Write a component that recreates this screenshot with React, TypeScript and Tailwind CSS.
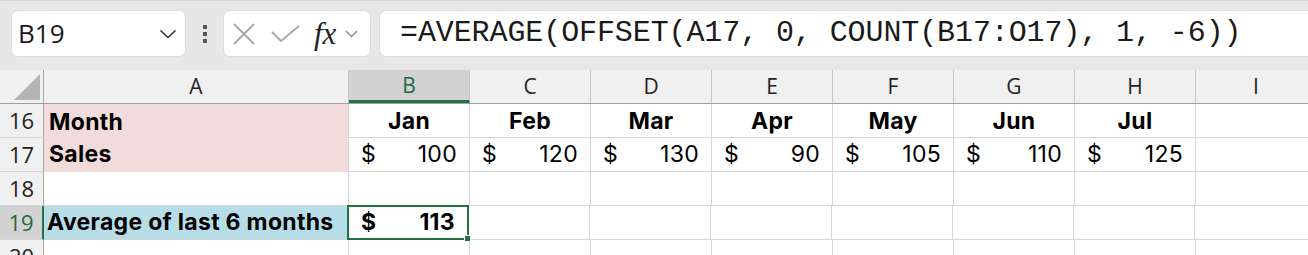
import React from "react";

const cols = ["B", "C", "D", "E", "F", "G", "H", "I"];
const months = ["Jan", "Feb", "Mar", "Apr", "May", "Jun", "Jul"];
const sales = [100, 120, 130, 90, 105, 110, 125];

const cellFont = { fontFamily: "Inter, 'Noto Sans', sans-serif" };
const uiFont = { fontFamily: "'Open Sans', 'Noto Sans', sans-serif" };

function RowHead({ n, active }: { n: number; active?: boolean }) {
  return (
    <div
      className={`w-[44px] shrink-0 h-[34px] flex items-center justify-center text-[22px] tracking-normal font-normal border-b border-[#d6d6d6] ${
        active
          ? "bg-[#d2d2d2] text-[#1e6b41] border-r-2 border-r-[#217346]"
          : "bg-[#f0f0f0] text-[#222] border-r border-r-[#a8a8a8]"
      }`}
      style={uiFont}
    >
      {n}
    </div>
  );
}

function Money({ v, bold }: { v: number; bold?: boolean }) {
  return (
    <div className={`flex w-full justify-between pl-[12px] pr-[12px] ${bold ? "font-bold" : ""}`}>
      <span>$</span>
      <span>{v}</span>
    </div>
  );
}

export default function App() {
  return (
    <div className="w-[1308px] h-[255px] overflow-hidden bg-white text-black">
      {/* formula bar */}
      <div className="h-[70px] bg-[#e7e7e7] border-t border-[#dadada] flex items-start pt-[9px] pl-[11px]">
        <div className="w-[175px] h-[47px] bg-white rounded-[7px] border border-[#dcdcdc] flex items-center pl-[6px] pr-[8px]">
          <span className="text-[26px] text-[#1a1a1a]" style={uiFont}>B19</span>
          <svg className="ml-auto" width="18" height="10" viewBox="0 0 18 10">
            <path d="M1.5 1.5 L9 8.5 L16.5 1.5" fill="none" stroke="#333" strokeWidth="1.6" />
          </svg>
        </div>
        <div className="w-[37px] h-[47px] flex flex-col items-center justify-center gap-[3px]">
          <span className="w-[4px] h-[4px] bg-[#555]" />
          <span className="w-[4px] h-[4px] bg-[#555]" />
          <span className="w-[4px] h-[4px] bg-[#555]" />
        </div>
        <div className="w-[148px] h-[47px] bg-white rounded-[7px] border border-[#dcdcdc] flex items-center pl-[9px]">
          <svg width="22" height="22" viewBox="0 0 22 22">
            <path d="M1 1 L21 21 M21 1 L1 21" stroke="#a6a6a6" strokeWidth="1.8" />
          </svg>
          <svg className="ml-[16px]" width="29" height="18" viewBox="0 0 29 18">
            <path d="M1 7 L10 16 L28 1" fill="none" stroke="#a6a6a6" strokeWidth="1.8" />
          </svg>
          <span
            className="ml-[14px] text-[31px] italic leading-none text-[#222]"
            style={{ fontFamily: "'Liberation Serif', 'DejaVu Serif', serif" }}
          >
            fx
          </span>
          <svg className="ml-[9px]" width="13" height="8" viewBox="0 0 13 8">
            <path d="M1 1 L6.5 6.5 L12 1" fill="none" stroke="#888" strokeWidth="1.4" />
          </svg>
        </div>
        <div className="ml-[8px] flex-1 h-[47px] bg-white rounded-l-[7px] border border-r-0 border-[#dcdcdc] flex items-center pl-[20px]">
          <span
            className="text-[30px] tracking-[-0.1px] text-[#1a1a1a] whitespace-nowrap"
            style={{ fontFamily: "'Liberation Mono', 'DejaVu Sans Mono', monospace" }}
          >
            =AVERAGE(OFFSET(A17, 0, COUNT(B17:O17), 1, -6))
          </span>
        </div>
      </div>

      {/* column headers */}
      <div className="flex h-[34px] border-b border-[#a0a0a0]" style={uiFont}>
        <div className="w-[44px] shrink-0 bg-[#f0f0f0] border-r border-[#a8a8a8] relative">
          <svg className="absolute right-[3px] bottom-[3px]" width="26" height="26" viewBox="0 0 26 26">
            <path d="M26 0 L26 26 L0 26 Z" fill="#b4b4b4" />
          </svg>
        </div>
        <div className="w-[305px] shrink-0 bg-[#f0f0f0] border-r border-[#c8c8c8] flex items-center justify-center text-[21px] text-[#222]">
          A
        </div>
        {cols.map((c) => (
          <div
            key={c}
            className={`w-[121px] shrink-0 border-r border-[#c8c8c8] flex items-center justify-center text-[21px] ${
              c === "B" ? "bg-[#d2d2d2] text-[#1e6b41] border-b-[3px] border-b-[#217346] pt-[2px]" : "bg-[#f0f0f0] text-[#222]"
            }`}
          >
            {c}
          </div>
        ))}
      </div>

      {/* rows */}
      <div className="text-[23px] tracking-[0.3px]" style={cellFont}>
        <div className="flex">
          <RowHead n={16} />
          <div className="w-[305px] shrink-0 h-[34px] bg-[#f2dcdb] border-r border-[#d6d6d6] flex items-center pl-[5px] pt-[2px] font-bold">
            Month
          </div>
          {cols.map((c, i) => (
            <div key={c} className="w-[121px] shrink-0 h-[34px] border-r border-b border-[#d6d6d6] flex items-center justify-center pt-[2px] font-bold">
              {months[i] ?? ""}
            </div>
          ))}
        </div>
        <div className="flex">
          <RowHead n={17} />
          <div className="w-[305px] shrink-0 h-[34px] bg-[#f2dcdb] border-r border-b border-[#d6d6d6] border-b-[#f2dcdb] flex items-center pl-[5px] font-bold">
            Sales
          </div>
          {cols.map((c, i) => (
            <div key={c} className="w-[121px] shrink-0 h-[34px] border-r border-b border-[#d6d6d6] flex items-center">
              {sales[i] !== undefined && <Money v={sales[i]} />}
            </div>
          ))}
        </div>
        <div className="flex">
          <RowHead n={18} />
          <div className="w-[305px] shrink-0 h-[34px] border-r border-b border-[#d6d6d6]" />
          {cols.map((c) => (
            <div key={c} className="w-[121px] shrink-0 h-[34px] border-r border-b border-[#d6d6d6]" />
          ))}
        </div>
        <div className="flex">
          <RowHead n={19} active />
          <div className="w-[304px] shrink-0 h-[34px] bg-[#b7dee8] border-b border-[#d6d6d6] flex items-center pl-[3px] font-bold">
            Average of last 6 months
          </div>
          <div className="w-[122px] shrink-0 relative flex items-center -ml-[1px] -mt-[1px] h-[35px] border-2 border-[#217346]">
            <Money v={113} bold />
            <span className="absolute -right-[4px] -bottom-[4px] w-[7px] h-[7px] bg-[#217346] border border-white" />
          </div>
          {cols.slice(1).map((c) => (
            <div key={c} className="w-[121px] shrink-0 h-[34px] border-r border-b border-[#d6d6d6]" />
          ))}
        </div>
        <div className="flex">
          <RowHead n={20} />
          <div className="w-[305px] shrink-0 h-[34px] border-r border-[#d6d6d6]" />
          {cols.map((c) => (
            <div key={c} className="w-[121px] shrink-0 h-[34px] border-r border-[#d6d6d6]" />
          ))}
        </div>
      </div>
    </div>
  );
}
